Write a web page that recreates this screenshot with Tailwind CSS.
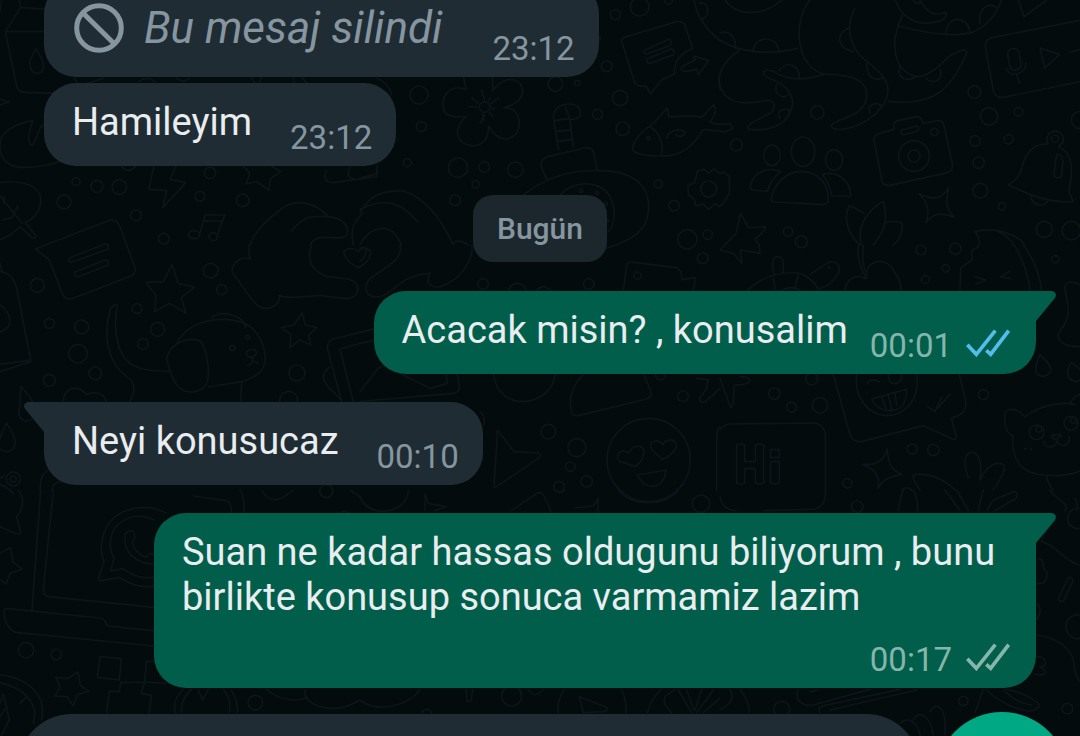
<!DOCTYPE html>
<html lang="tr">
<head>
  <meta charset="UTF-8">
  <meta name="viewport" content="width=device-width, initial-scale=1.0">
  <title>Sohbet</title>
  <script src="https://cdn.jsdelivr.net/npm/@tailwindcss/browser@4"></script>
</head>
<body class="bg-[#040b0d] font-['Roboto',sans-serif]">
  <div class="relative isolate flex h-screen flex-col overflow-hidden">

    <!-- wallpaper -->
    <svg class="absolute inset-0 -z-10 h-full w-full" viewBox="0 0 1080 736" preserveAspectRatio="xMidYMid slice" fill="none" stroke="#0c1519" stroke-width="5" stroke-linecap="round" stroke-linejoin="round" aria-hidden="true">
      <g transform="scale(.33333)">
        <path d="M0 35L5 0M58 0L62 22L16 95L50 258Q54 276 74 277L165 280M62 22L140 28M16 95H140M108 146C88 182 86 190 92 204C98 224 124 226 130 204C134 186 122 170 108 146ZM0 298L28 306L0 315"/>
        <path d="M98 362C50 370 0 395 0 430C-4 470 20 500 60 502C110 504 160 492 196 480M98 362C86 400 80 430 94 436C106 434 108 408 120 385L140 365"/>
        <path d="M0 548C50 540 100 550 118 580C132 620 110 650 76 668L108 708Q106 720 94 712L60 680C40 700 20 714 0 718M0 588L66 670M8 660L36 652L54 616M12 610V590"/>
        <circle cx="192" cy="606" r="21"/><circle cx="228" cy="545" r="12"/><circle cx="291" cy="559" r="18"/><circle cx="358" cy="561" r="22"/><circle cx="408" cy="646" r="16"/><circle cx="491" cy="716" r="16"/><circle cx="600" cy="589" r="15"/><circle cx="630" cy="519" r="17"/><circle cx="728" cy="601" r="19"/>
        <path d="M462 495L447 568L500 572L488 624L557 548L510 538L530 495M732 500L750 520L738 552L770 545L806 570L812 535L843 515L810 495M365 500Q385 522 405 500M222 232L232 250M262 250L310 235M415 246Q440 225 466 246M530 235Q550 250 568 235M755 232L765 250M785 232L775 250M880 232L884 250M905 232L922 250"/>
        <path d="M600 700L616 644L674 645L650 710M610 662L668 663"/><ellipse cx="582" cy="704" rx="17" ry="12"/><ellipse cx="640" cy="710" rx="13" ry="12"/>
        <path d="M980 510C970 530 972 546 1000 548L1130 530V500M1050 500Q1035 530 1060 536"/>
        <path d="M750 735C760 700 800 660 840 630C890 590 950 610 985 650M875 692C910 650 930 645 985 650C1030 655 1050 680 1040 705C1020 730 950 690 930 735M1060 735C1050 690 1060 665 1090 640"/>
      </g>
      <g transform="translate(360 0) scale(.33333)">
        <path d="M310 230L318 268C270 250 240 290 252 330C260 356 300 350 318 350C275 390 290 430 335 438C380 436 386 400 386 378C410 420 440 430 470 400C490 360 470 320 430 324C480 310 500 280 480 250C450 225 420 245 398 272V230"/>
        <circle cx="374" cy="321" r="16"/><path d="M374 300L364 270M374 345L360 370M392 312L416 292M355 310L336 294M352 321L326 320M396 325L402 326M388 338L400 350M368 342L372 362M385 302L392 292"/>
        <circle cx="177" cy="285" r="27"/><circle cx="184" cy="380" r="15"/><circle cx="142" cy="488" r="12"/><circle cx="294" cy="503" r="29"/><circle cx="373" cy="501" r="16"/><circle cx="466" cy="509" r="23"/><circle cx="347" cy="553" r="11"/><circle cx="285" cy="601" r="16"/><circle cx="586" cy="252" r="22"/><circle cx="652" cy="249" r="8"/><circle cx="740" cy="199" r="16"/><circle cx="766" cy="44" r="15"/><circle cx="839" cy="20" r="28"/><circle cx="926" cy="0" r="12"/><circle cx="780" cy="294" r="23"/><circle cx="713" cy="343" r="15"/><circle cx="788" cy="386" r="20"/><circle cx="895" cy="552" r="12"/><circle cx="942" cy="617" r="16"/><circle cx="982" cy="718" r="29"/><circle cx="1043" cy="704" r="14"/><circle cx="717" cy="116" r="4"/>
        <path d="M596 450L580 350C582 325 600 312 635 312Q660 315 662 345Q655 360 630 358L640 440M583 362L628 355M588 394L632 390M594 424L636 418M614 315L630 358"/>
        <path d="M560 538L542 494Q545 476 562 470L675 444Q695 442 700 454L712 510M490 585C560 530 640 508 720 512C810 512 866 550 866 620C866 690 820 720 738 745M600 585C640 540 720 540 750 590C770 630 765 680 738 700"/>
        <circle cx="664" cy="572" r="5"/><circle cx="711" cy="580" r="5"/><circle cx="737" cy="611" r="5"/><circle cx="742" cy="663" r="4"/>
        <path d="M785 124Q782 118 792 112L950 65Q966 62 974 74L998 145C965 160 940 180 944 222L905 240L872 282L858 258Q830 262 824 248ZM855 150L928 117Q940 126 928 138L860 162Q846 160 855 150ZM862 176L935 146Q948 152 940 164L872 190Q856 190 862 176ZM965 200L1005 180L1000 168L1046 182L1015 224L1010 208L978 214Q960 212 965 200Z"/>
        <path d="M818 444C820 420 850 390 880 370L922 324L926 350C960 350 1000 345 1025 352C1045 335 1050 320 1062 314C1070 340 1062 350 1050 366C1060 372 1080 375 1110 370L1120 385L1095 396L1030 388C1000 440 960 470 905 468C870 468 812 464 818 444ZM870 380C905 400 910 440 904 466M920 416C925 385 970 385 975 398C970 412 950 412 948 403"/><circle cx="865" cy="415" r="5"/>
        <path d="M1002 0C1010 50 1040 90 1082 124M1018 10C1050 0 1050 55 1026 56M1082 225C1072 240 1076 265 1086 272"/>
        <circle cx="1046" cy="567" r="24"/><path d="M1012 514L1032 508L1046 520L1062 506L1078 520L1092 516L1108 530V550L1108 580L1092 606L1080 620L1066 612L1046 628L1030 612L1008 618L1002 598L985 584L984 556L1004 548Z"/>
        <path d="M0 640C20 600 50 570 130 573C190 590 240 650 280 735M0 628C60 600 110 590 175 668M0 735C20 690 90 650 124 735M275 730Q300 715 325 735M52 495V520L0 535M50 235C80 245 90 265 95 285"/>
      </g>
      <g transform="translate(720 0) scale(.33333)">
        <path d="M15 0C50 50 130 50 185 0M0 120C60 160 150 165 232 145M0 98C30 90 50 115 46 146M100 156C100 105 170 105 176 150M270 0C215 70 230 200 310 222M60 150C0 190 -20 240 15 285C60 330 130 295 152 302C170 310 165 335 140 345C110 360 70 380 88 388C160 395 205 370 216 320C225 280 190 250 150 236C110 215 140 205 160 214C200 240 250 245 315 222C400 225 440 240 440 285C440 330 400 345 355 362C320 375 335 390 365 388C440 380 505 320 504 270C500 220 455 200 430 175C390 140 375 80 404 25M178 212C200 180 240 195 238 236M170 252C160 285 190 300 208 282M180 356C165 330 200 320 212 335M388 85C350 90 345 150 402 154M440 190C440 230 460 245 488 234M450 340C440 310 470 305 485 318"/>
        <path d="M525 0C560 80 620 75 665 62Q690 40 672 38C640 50 620 35 600 0M580 0Q590 15 602 6M548 45C500 140 530 230 600 230C660 215 670 165 728 150Q745 150 738 165C690 270 640 320 505 304M535 78C620 100 700 112 755 98C800 80 830 40 845 0M678 102C680 45 740 45 750 94M780 70C775 30 800 5 828 22M540 198C530 225 550 250 585 232M618 236C640 255 670 240 660 208M895 0L912 50L980 0"/>
        <path d="M1085 60L820 112Q794 118 796 140L820 272Q826 294 850 292L1085 244M960 144L1019 163L974 204ZM1050 156L1085 148M858 205C870 235 915 225 918 190M890 226L900 250"/><rect x="866" y="145" width="34" height="66" rx="17" transform="rotate(-10 883 178)"/>
        <circle cx="763" cy="276" r="19"/><circle cx="807" cy="349" r="26"/><circle cx="895" cy="335" r="13"/><circle cx="1080" cy="360" r="26"/><circle cx="765" cy="423" r="16"/><circle cx="866" cy="418" r="14"/><circle cx="776" cy="488" r="17"/><circle cx="781" cy="572" r="22"/><circle cx="846" cy="619" r="11"/><circle cx="973" cy="688" r="24"/><circle cx="1054" cy="692" r="28"/><circle cx="292" cy="337" r="20"/><circle cx="49" cy="435" r="18"/><circle cx="204" cy="695" r="14"/><circle cx="244" cy="725" r="18"/>
        <ellipse cx="249" cy="455" rx="35" ry="44"/><ellipse cx="156" cy="466" rx="25" ry="31"/><ellipse cx="342" cy="480" rx="26" ry="31"/>
        <path d="M154 598C160 550 200 514 245 514C300 516 330 560 324 605Q320 614 310 614L164 606Q154 606 154 598ZM182 514C140 498 94 520 90 564Q92 570 100 570L142 574Q150 540 182 514ZM308 524C350 510 390 540 393 585Q390 592 380 588L336 588Q328 550 308 524Z"/>
        <path d="M462 422Q460 408 474 402L522 388V372Q524 364 534 362L590 350Q606 350 608 370L652 362Q668 362 672 376L697 492Q700 512 682 518L510 556Q492 558 486 544ZM545 390L590 378Q600 384 592 394L550 404Q538 400 545 390Z"/><circle cx="582" cy="468" r="46"/><circle cx="582" cy="468" r="18"/><circle cx="643" cy="396" r="11"/>
        <path d="M984 432C965 390 1035 375 1030 425L1016 440C1060 460 1060 510 1046 575L1060 605C980 610 920 580 865 555C910 530 900 500 920 465Q940 430 984 432ZM932 586C935 622 980 622 984 600M1012 462Q1030 465 1028 490L1024 530Q1004 540 1002 520L1008 475Z"/><circle cx="1005" cy="416" r="11"/>
        <path d="M598 582C640 600 665 600 686 563C676 610 680 630 703 652C660 635 640 640 618 668C630 630 625 610 598 582ZM62 640L86 684L136 680Q140 690 104 718L118 735L120 760L62 750L65 790L40 760L0 750L48 700Z"/>
        <path d="M425 735C410 690 430 640 490 604C500 640 505 680 460 735M432 640L388 616C370 650 380 700 420 735M498 668Q530 660 546 670Q550 710 520 735M765 695C820 680 890 700 915 735M765 695Q780 710 778 735M830 692Q870 710 880 735"/>
      </g>
      <g transform="translate(0 245) scale(.33333)">
        <path d="M380 0L405 68Q408 85 395 92L220 160Q198 168 188 148L148 45L106 12L330 -75Q350 -78 360 -55ZM210 38L318 -4Q330 2 325 12L216 52Q200 50 210 38ZM226 80L318 44Q330 50 324 60L234 96Q218 92 226 80Z"/>
        <path d="M516 58L535 116L584 126L544 158L558 205L508 175L464 200L468 150L437 112L490 110ZM906 203L916 240L950 247L926 270L932 300L900 284L870 308L872 268L843 248L882 240Z"/>
        <circle cx="112" cy="121" r="21"/><circle cx="148" cy="235" r="15"/><circle cx="245" cy="246" r="21"/><circle cx="234" cy="326" r="28"/><circle cx="286" cy="385" r="19"/><circle cx="148" cy="406" r="18"/><circle cx="411" cy="191" r="15"/><circle cx="473" cy="253" r="21"/><circle cx="429" cy="297" r="16"/><circle cx="632" cy="77" r="22"/><circle cx="665" cy="134" r="15"/><circle cx="891" cy="384" r="24"/><circle cx="866" cy="466" r="27"/><circle cx="697" cy="309" r="8"/><circle cx="743" cy="277" r="6"/><circle cx="40" cy="702" r="21"/><circle cx="40" cy="702" r="9"/>
        <path d="M390 470C405 440 410 415 380 395C320 350 310 270 330 195Q345 170 352 184C340 240 350 310 375 340C410 380 450 375 508 380M530 295C560 235 640 210 720 230C760 240 800 290 795 350C790 380 770 395 725 410L625 426M500 340C510 290 580 270 605 292C625 330 628 380 622 410C610 445 560 450 535 425C520 410 505 370 500 340ZM636 218C660 190 740 215 736 248M725 410L722 470M740 320C735 335 750 335 756 338C770 330 772 320 764 314Q752 310 740 320ZM756 338L758 350Q750 362 742 362M760 348L774 354"/>
        <path d="M0 80C30 85 40 95 50 130L93 350L0 380M0 358L86 346M0 180C40 210 40 250 0 260M0 55L6 80M62 424C100 465 120 500 100 520C70 540 50 520 60 480ZM20 535C-5 580 -8 600 0 612C20 630 45 615 46 590C44 570 30 550 20 535ZM190 470C190 430 230 415 258 448C280 440 310 440 320 470M0 700L15 690M0 718C20 725 30 735 40 745M120 735C120 690 135 680 150 670M155 735C160 710 180 705 220 715"/>
        <path d="M745 0C750 30 745 38 752 42C720 30 690 60 698 84C720 110 750 165 775 183C800 200 840 185 838 152C880 165 930 150 960 152C1010 155 1060 175 1072 140C1080 100 1040 100 980 95C930 75 920 40 935 0M1075 68C1040 50 1030 30 1032 20C1045 5 1065 10 1075 20C1085 5 1110 5 1112 25C1110 45 1090 60 1075 68Z"/>
        <path d="M1080 262L1000 282Q980 290 982 310L1025 470M1080 295L1020 312L1060 470M990 365C960 390 965 410 1000 440L1020 462"/>
      </g>
      <g transform="translate(360 245) scale(.33333)">
        <path d="M0 50C30 20 20 0 0 10M120 0C130 40 90 60 30 100C0 140 30 160 60 155C110 140 120 90 210 85C190 120 220 130 245 124C310 100 340 40 336 0M0 262L50 250M0 295L50 285"/>
        <circle cx="369" cy="117" r="16"/><circle cx="686" cy="117" r="16"/><circle cx="832" cy="92" r="11"/><circle cx="1028" cy="40" r="16"/><circle cx="969" cy="454" r="16"/><circle cx="901" cy="390" r="14"/><circle cx="565" cy="560" r="22"/><circle cx="651" cy="608" r="27"/><circle cx="631" cy="665" r="14"/><circle cx="680" cy="709" r="17"/><circle cx="597" cy="725" r="16"/>
        <path d="M446 138Q450 115 472 115Q494 117 500 138M530 138Q550 112 572 138M790 136L800 60Q805 50 820 52L950 68Q966 74 966 104L1006 98L1000 136M0 440L50 375Q62 362 76 362M110 380L210 430L262 415L258 388M0 470L50 465L280 445Q300 440 298 425L292 388M400 388C410 450 450 470 490 470C550 465 580 430 586 388M670 388C635 420 625 470 635 500Q640 514 655 512L860 462Q876 456 872 440C865 420 860 405 850 388M1010 400L1044 404L1040 430L1018 462Q1020 474 1034 472L1080 430M360 500Q378 515 370 540M415 558L462 620L535 624Q548 630 535 640L410 725Q400 732 402 718L412 570Q410 555 415 558ZM1080 545Q1070 552 1070 570V735"/>
        <circle cx="866" cy="645" r="125"/><path d="M828 665L780 650C765 635 775 615 795 618L808 624C815 600 850 595 852 620C850 640 840 655 828 665ZM908 644L876 615C865 595 880 583 900 590L908 600C915 580 948 580 950 603C945 620 925 635 908 644ZM832 690L918 675C915 705 900 722 878 724C855 724 840 710 832 690Z"/>
      </g>
      <g transform="translate(720 245) scale(.33333)">
        <path d="M165 90C150 60 160 30 175 35C195 40 190 60 190 84M80 138C130 90 190 80 235 84C260 90 285 110 298 138M235 90L225 128M160 100L165 130M185 136Q210 120 240 136M270 88L325 52C350 45 365 65 355 85C340 110 320 125 300 130M375 136C380 100 410 85 435 100M415 0C410 40 420 70 440 100M430 0C425 40 430 70 442 90M440 80C450 40 500 40 520 75Q545 110 543 138M778 0C770 15 750 10 755 30C765 50 735 55 722 70L720 136M766 95L798 106L768 117M870 77L843 96L872 101M882 0Q920 60 930 136M910 0Q955 60 965 136M1080 120C1050 105 1035 110 1034 130C1060 230 1030 240 1015 265C1010 300 1050 305 1080 305"/>
        <circle cx="603" cy="15" r="15"/><circle cx="706" cy="11" r="17"/><circle cx="677" cy="70" r="11"/><circle cx="616" cy="104" r="12"/><circle cx="1006" cy="43" r="11"/><circle cx="163" cy="446" r="17"/><circle cx="215" cy="487" r="15"/><circle cx="300" cy="481" r="23"/><circle cx="275" cy="402" r="18"/><circle cx="790" cy="449" r="15"/><circle cx="576" cy="612" r="15"/><circle cx="640" cy="615" r="17"/><circle cx="382" cy="715" r="14"/><circle cx="328" cy="68" r="2"/>
        <path d="M340 388L390 570Q400 592 425 590L610 542L700 583Q712 584 708 570L694 520C730 510 745 490 735 460L718 388M410 388C400 450 440 510 500 512C560 510 600 460 590 388M455 462L560 432C560 470 545 495 515 497C485 497 465 485 455 462ZM485 456L498 490M505 450L515 494M525 446L530 480M440 418Q452 396 478 410M505 388C500 425 550 425 545 388M622 484L645 500L665 455M655 488L690 447"/>
        <path d="M960 328C945 360 945 375 950 385C962 400 985 395 992 378C995 360 975 345 960 328ZM1055 352C1040 375 1040 392 1050 402C1062 412 1075 410 1080 405M1055 352L1080 372M0 400L18 450L32 488Q42 490 42 420Q90 420 90 405Q85 396 60 395M0 555Q10 538 30 537L280 534Q310 536 316 565V735"/>
        <path d="M50 600Q62 594 74 600V650H106V600Q118 594 131 600V714Q118 720 106 714V670H74V714Q62 720 50 714ZM152 614H178V638H152ZM152 650H178V714Q166 720 152 714Z"/>
        <path d="M502 612C504 650 510 675 546 688C510 695 490 700 474 730C480 695 470 675 427 658C470 660 490 650 502 612ZM580 690C620 680 670 700 705 735M580 690Q575 700 600 735M745 700C725 640 740 620 758 622C780 625 785 660 780 705C800 660 830 650 848 658C860 670 850 690 820 735M545 735Q560 722 575 735"/>
        <path d="M910 512C890 485 855 490 855 510C850 545 865 570 878 572C875 640 900 690 980 690C1020 695 1060 685 1080 678M915 515C960 480 1020 470 1065 478M1052 474Q1060 455 1080 448M1010 584L994 576Q998 564 1010 572Q1018 562 1022 572ZM1010 586C1010 612 975 612 972 590M1012 588C1020 610 1050 605 1048 575M980 695Q985 720 1000 735"/>
        <circle cx="950" cy="562" r="22"/><circle cx="957" cy="552" r="9"/><circle cx="1053" cy="535" r="21"/><circle cx="1060" cy="526" r="9"/><circle cx="917" cy="611" r="2"/><circle cx="933" cy="613" r="2"/>
      </g>
      <g transform="translate(0 490) scale(.33333)">
        <path d="M55 0C80 30 65 60 50 82L62 126Q62 134 50 132L0 110M0 190L32 172L38 215L66 238L30 250L18 282L0 268M122 0L96 360M160 0L130 300Q130 318 146 320L460 352M580 18L680 32Q694 36 694 68M720 0Q735 20 732 68M12 365Q12 355 25 356L300 384Q315 386 318 400Q322 410 340 410L460 422M12 365C14 400 30 425 55 428L460 468"/>
        <path d="M498 70C440 35 350 55 320 110C300 150 300 185 312 215L295 265Q295 275 305 272L360 262C390 285 430 295 462 288M462 90C410 65 360 85 338 125C325 160 330 180 342 205L332 243L370 236C400 262 435 265 460 262M375 140C370 130 390 118 400 124L405 142Q404 152 396 160C405 185 420 195 438 202L450 190L462 192M375 140C370 180 400 220 462 222M785 0C800 30 830 35 850 22L880 0M1050 0L1080 20M1020 68Q1035 60 1045 68"/>
        <circle cx="78" cy="481" r="23"/><circle cx="169" cy="493" r="16"/><circle cx="979" cy="3" r="20"/><circle cx="766" cy="638" r="22"/>
        <path d="M234 545L240 585L266 604L232 614L220 648L200 620L164 618L180 592L168 562L204 566ZM300 500L364 506L358 570L292 562ZM462 514L440 514L434 576L362 578L358 605L328 604L320 668M434 576L424 610L454 616L448 668M434 576L498 580M0 555C60 560 110 590 125 640Q130 670 125 690M0 578C50 590 90 610 105 665L100 700M0 640L10 612L28 690L5 735M0 680L20 650M60 640L80 620M525 668C520 640 530 615 550 597M545 668C540 640 560 610 575 597M595 600L608 630L625 598M670 597Q695 630 688 668M695 602Q715 635 712 668M800 597C830 630 890 635 915 625M915 600C910 640 960 655 1010 655C1040 655 1060 640 1080 630"/>
      </g>
      <g transform="translate(360 490) scale(.33333)">
        <path d="M0 20C20 70 80 75 125 45C145 25 145 10 145 0M195 12L205 40L258 50L225 62M195 12V62M455 62L530 10Q542 4 550 14L575 68M645 54L700 48L714 25V66M775 0C810 50 920 50 955 0M590 0Q600 15 612 0M0 630C50 670 140 650 180 600M318 598L322 635L334 632L338 598M505 598Q525 630 550 598M595 668C590 640 600 620 612 598M785 600Q800 630 798 668M658 620L740 652Q745 660 735 665L670 668ZM862 668C870 635 890 610 905 598M915 620L945 598M915 625Q905 640 935 668M955 600L995 668M980 600L1002 660M1025 598L1005 660M1060 600L1010 668M1080 625L1030 668"/>
        <circle cx="455" cy="618" r="30"/><circle cx="1023" cy="41" r="26"/><circle cx="200" cy="672" r="14"/>
      </g>
      <g transform="translate(720 490) scale(.33333)">
        <path d="M0 20Q5 60 48 62M130 62L280 58Q320 50 316 0M535 62Q540 20 550 0M580 0Q595 30 592 62M675 0L720 62M710 0L745 62M775 62Q780 30 790 0M825 62L888 25Q898 5 880 5L820 30L800 62M990 0C1010 30 1050 40 1035 62M1065 25Q1075 40 1070 62M1005 90C980 120 965 140 965 155M965 155C1010 165 1040 220 1080 225M955 205C975 205 965 235 975 240C990 260 975 285 952 280M1045 262Q1060 262 1058 275L1030 335Q1015 335 1016 325ZM952 340Q970 360 950 388M950 435C1000 440 1050 470 1060 510Q1065 560 1080 575M950 500C980 500 985 530 960 530C990 545 975 560 945 552M790 598L765 668M800 600C830 630 900 670 940 662Q965 650 955 640C920 610 890 605 860 598M850 600Q890 640 935 645M300 668Q290 650 320 645L540 598M330 660L590 600M235 598C220 630 250 650 280 645L450 598M270 605L295 600M30 598Q50 635 0 660M60 598Q90 640 88 668M540 700C560 680 590 690 600 735M580 690C590 660 630 670 640 735M630 665C650 630 680 650 675 735"/>
        <circle cx="412" cy="50" r="17"/><circle cx="1074" cy="85" r="31"/><circle cx="1074" cy="410" r="36"/><circle cx="185" cy="658" r="24"/><circle cx="730" cy="633" r="14"/><circle cx="1042" cy="656" r="16"/>
      </g>
    </svg>

    <!-- messages -->
    <main class="-mt-[18px] flex flex-1 flex-col px-11 text-[38px] leading-[45px] text-[#e9edef]">
      <div class="flex items-end gap-[50px] self-start rounded-[32px] bg-[#1f2c34] pt-[21px] pr-6 pb-2 pl-[30px] text-[#8696a0]">
        <div class="mb-4 flex items-center gap-5">
          <svg class="size-[50px]" viewBox="0 0 50 50" fill="none" stroke="currentColor" stroke-width="5" aria-hidden="true">
            <circle cx="25" cy="25" r="22.3"/>
            <path d="M9.5 10.5L40.5 41"/>
          </svg>
          <p class="text-[44px] italic">Bu mesaj silindi</p>
        </div>
        <time class="text-[33px] leading-10">23:12</time>
      </div>

      <div class="mt-[6px] flex items-end gap-[38px] self-start rounded-[32px] bg-[#1f2c34] pt-[17px] pr-6 pb-2 pl-7">
        <p class="mb-[13px]">Hamileyim</p>
        <time class="text-[33px] leading-10 text-[#8696a0]">23:12</time>
      </div>

      <div class="my-[29px] self-center rounded-[20px] bg-[#1c272d] px-6 py-4 text-[30px] leading-[35px] font-medium text-[#8696a0]">Bugün</div>

      <div class="relative flex items-end gap-[22px] self-end rounded-[32px] rounded-tr-none bg-[#005e4b] pt-[17px] pr-[26px] pb-2 pl-7">
        <svg class="absolute top-0 left-full -ml-px h-[30px] w-[21px] text-[#005e4b]" viewBox="0 0 21 30" fill="currentColor" aria-hidden="true"><path d="M0 0H16C20.500 0 22.500 4 19.500 7.500L1 30H0Z"/></svg>
        <p class="mb-[13px]">Acacak misin? , konusalim</p>
        <div class="flex items-end gap-[14px]">
          <time class="text-[33px] leading-10 text-[#86b5ab]">00:01</time>
          <svg class="mb-[9px] h-7 w-11 text-[#53bdeb]" viewBox="0 0 132 84" fill="none" stroke="currentColor" stroke-width="11" role="img" aria-label="Okundu"><path d="M4 47L31 76L88 5M61 64L74 76L128 5"/></svg>
        </div>
      </div>

      <div class="relative mt-7 flex items-end gap-[38px] self-start rounded-[32px] rounded-tl-none bg-[#1f2c34] pt-[17px] pr-6 pb-2 pl-7">
        <svg class="absolute top-0 right-full -mr-px h-[30px] w-[21px] text-[#1f2c34]" viewBox="0 0 21 30" fill="currentColor" aria-hidden="true"><path d="M21 0H5C0.500 0 -1.500 4 1.500 7.500L20 30H21Z"/></svg>
        <p class="mb-[13px]">Neyi konusucaz</p>
        <time class="text-[33px] leading-10 text-[#8696a0]">00:10</time>
      </div>

      <div class="relative mt-7 flex max-w-[882px] flex-col gap-5 self-end rounded-[32px] rounded-tr-none bg-[#005e4b] pt-[17px] pr-[26px] pb-2 pl-7">
        <svg class="absolute top-0 left-full -ml-px h-[30px] w-[21px] text-[#005e4b]" viewBox="0 0 21 30" fill="currentColor" aria-hidden="true"><path d="M0 0H16C20.500 0 22.500 4 19.500 7.500L1 30H0Z"/></svg>
        <p>Suan ne kadar hassas oldugunu biliyorum , bunu birlikte konusup sonuca varmamiz lazim</p>
        <div class="flex items-end gap-[14px] self-end">
          <time class="text-[33px] leading-10 text-[#86b5ab]">00:17</time>
          <svg class="mb-[9px] h-7 w-11 text-[#86b5ab]" viewBox="0 0 132 84" fill="none" stroke="currentColor" stroke-width="11" role="img" aria-label="İletildi"><path d="M4 47L31 76L88 5M61 64L74 76L128 5"/></svg>
        </div>
      </div>
    </main>

    <!-- composer, runs past the bottom of the screen -->
    <footer class="-mb-[107px] flex shrink-0 items-start gap-4 pt-6 pr-3 pl-[18px]">
      <input type="text" aria-label="Mesaj" class="mt-0.5 h-[108px] min-w-0 flex-1 rounded-full bg-[#1f2c34] px-14 text-[38px] text-[#e9edef] outline-none">
      <button type="button" aria-label="Sesli mesaj" class="size-[132px] shrink-0 rounded-full bg-[#00a884]"></button>
    </footer>
  </div>
</body>
</html>
